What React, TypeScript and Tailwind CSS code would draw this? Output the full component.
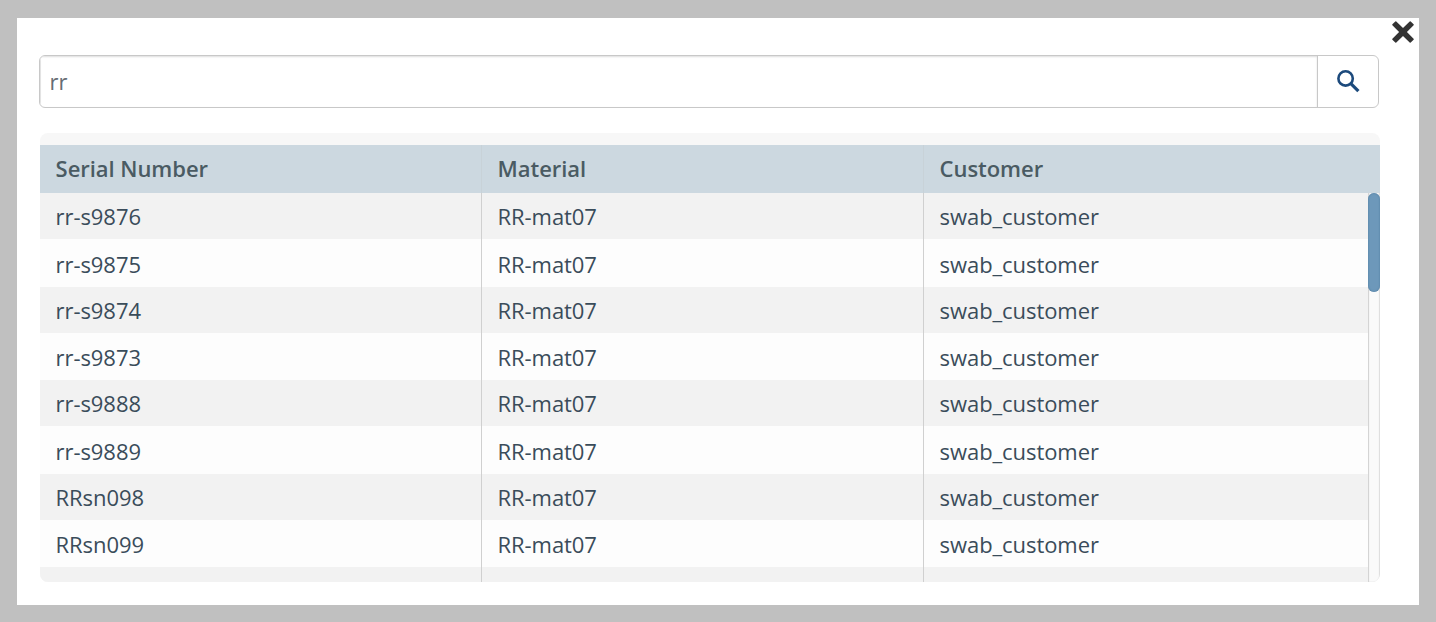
const rows = [
  { serial: 'rr-s9876', height: 'h-[46px]' },
  { serial: 'rr-s9875', height: 'h-[48px]' },
  { serial: 'rr-s9874', height: 'h-[46px]' },
  { serial: 'rr-s9873', height: 'h-[47px]' },
  { serial: 'rr-s9888', height: 'h-[46px]' },
  { serial: 'rr-s9889', height: 'h-[48px]' },
  { serial: 'RRsn098', height: 'h-[46px]' },
  { serial: 'RRsn099', height: 'h-[47px]' },
  { serial: '', height: 'h-[15px]' },
];

const cell = 'flex items-center whitespace-nowrap pl-[15.6px]';

function SearchBar() {
  return (
    <div className="flex h-[53px] w-[1340px] overflow-hidden rounded-[6px] border border-[#c8c8c8] bg-white">
      <div className="flex flex-1 items-center border-r border-[#c8c8c8] pl-[9.5px] text-[22px] text-[#666d75] shadow-[inset_0_1px_2px_#dedede,inset_1px_0_0_#e6e6e6]">
        rr
      </div>
      <button aria-label="Search" className="flex w-[60px] items-center justify-center">
        <svg width="24" height="24" viewBox="0 0 24 24" fill="none" stroke="#1c4a7c" className="mb-[2px]">
          <circle cx="9.6" cy="9.4" r="7.2" strokeWidth="2.6" />
          <path d="M14.6 14.4L22.4 22.2" strokeWidth="3.2" />
        </svg>
      </button>
    </div>
  );
}

export default function App() {
  return (
    <div className="h-[622px] w-[1436px] bg-[#c0c0c0] pl-[17px] pt-[18px] font-['Open_Sans',sans-serif]">
      <div className="relative h-[587px] w-[1402px] bg-white pl-[22px] pt-[37px]">
        <button aria-label="Close" className="absolute right-[4px] top-[2px]">
          <svg width="24" height="24" viewBox="0 0 24 24" className="block">
            <path
              d="M5.3 1.4L12 8.1L18.7 1.4Q19.2 .9 19.7 1.4L22.6 4.3Q23.1 4.8 22.6 5.3L15.9 12L22.6 18.7Q23.1 19.2 22.6 19.7L19.7 22.6Q19.2 23.1 18.7 22.6L12 15.9L5.3 22.6Q4.8 23.1 4.3 22.6L1.4 19.7Q.9 19.2 1.4 18.7L8.1 12L1.4 5.3Q.9 4.8 1.4 4.3L4.3 1.4Q4.8 .9 5.3 1.4Z"
              fill="#333"
            />
          </svg>
        </button>
        <SearchBar />
        <div className="ml-px mt-[25px] flex h-[449px] w-[1340px] flex-col overflow-hidden rounded-[8px] bg-[#f7f7f7] pt-3">
          <div className="grid h-12 shrink-0 grid-cols-[442px_442px_456px] bg-[#ccd8e0] text-[22px] font-semibold tracking-[-0.05px] text-[#4a5b63]">
            <div className={`${cell} border-r border-[#c8d2d8] pb-[2px]`}>Serial Number</div>
            <div className={`${cell} border-r border-[#c8d2d8] pb-[2px]`}>Material</div>
            <div className={`${cell} pb-[2px]`}>Customer</div>
          </div>
          <div className="flex min-h-0 flex-1 text-[22px] tracking-[-0.07px] text-[#3a4c5a]">
            <div className="w-[1328px]">
              {rows.map((row, i) => {
                const shade = i % 2 === 0 ? 'bg-[#f2f2f2]' : 'bg-[#fdfdfd] [&>div]:pt-[2px]';
                return (
                  <div key={i} className={`grid grid-cols-[442px_442px_444px] ${row.height} ${shade}`}>
                    <div className={`${cell} border-r border-[#d0d0d0]`}>{row.serial}</div>
                    <div className={`${cell} border-r border-[#d0d0d0]`}>{row.serial && 'RR-mat07'}</div>
                    <div className={cell}>{row.serial && 'swab_customer'}</div>
                  </div>
                );
              })}
            </div>
            <div className="w-3 rounded-br-[6px] bg-[#fafafa] shadow-[inset_1px_0_1px_#d0d0d0,inset_-1px_0_1px_#dcdcdc]">
              <div className="h-[99px] rounded-full bg-[#6d98ba] shadow-[inset_0_0_2px_#48769a]" />
            </div>
          </div>
        </div>
      </div>
    </div>
  );
}
